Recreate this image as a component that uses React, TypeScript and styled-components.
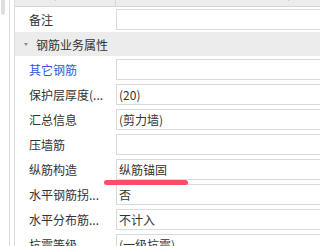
import React from 'react'
import styled, { createGlobalStyle } from 'styled-components'

const GlobalStyle = createGlobalStyle`
  html, body {
    margin: 0;
    padding: 0;
    background: #fff;
    overflow: hidden;
  }
  body {
    font-family: "Noto Sans CJK SC", "Noto Sans", sans-serif;
    font-size: 12px;
    color: #333;
  }
`

type Row = { label: string; value?: string; link?: boolean }

const groupRows: Row[] = [
  { label: '其它钢筋', link: true },
  { label: '保护层厚度(...', value: '(20)' },
  { label: '汇总信息', value: '(剪力墙)' },
  { label: '压墙筋' },
  { label: '纵筋构造', value: '纵筋锚固' },
  { label: '水平钢筋拐...', value: '否' },
  { label: '水平分布筋...', value: '不计入' },
  { label: '抗震等级', value: '(一级抗震)' },
]

function PropertyRow({ label, value, link }: Row) {
  return (
    <RowLine>
      <Label $link={link}>{label}</Label>
      <ValueCell>
        <ValueBox>{value}</ValueBox>
      </ValueCell>
    </RowLine>
  )
}

export default function App() {
  return (
    <>
      <GlobalStyle />
      <Frame>
        <Gutter>
          <Thumb />
        </Gutter>
        <Spacer />
        <Grid>
          <HeaderRow>
            <HeaderCell $divider>
              <HeaderText>属性名称</HeaderText>
            </HeaderCell>
            <HeaderCell>
              <HeaderText>属性值</HeaderText>
            </HeaderCell>
          </HeaderRow>
          <PropertyRow label="备注" />
          <GroupRow>
            <Caret />
            <span>钢筋业务属性</span>
          </GroupRow>
          {groupRows.map((r) => (
            <PropertyRow key={r.label} {...r} />
          ))}
        </Grid>
        <Underline />
      </Frame>
    </>
  )
}

const Frame = styled.div`
  position: relative;
  display: flex;
  width: 320px;
  height: 246px;
  overflow: hidden;
`

const Gutter = styled.div`
  flex: none;
  width: 8px;
  padding-left: 1px;
  border-right: 1px solid #dcdcdc;
`

const Thumb = styled.div`
  width: 4px;
  height: 15px;
  background: #dedede;
  border-radius: 0 0 2px 2px;
`

const Spacer = styled.div`
  flex: none;
  width: 4px;
  border-right: 1px solid #dcdcdc;
`

const Grid = styled.div`
  flex: none;
  width: 453px;
  display: flex;
  flex-direction: column;
`

const HeaderRow = styled.div`
  display: grid;
  grid-template-columns: 101px 1fr;
  height: 6px;
  background: #ececec;
  border-bottom: 1px solid #d6d6d6;
  flex: none;
`

const HeaderCell = styled.div<{ $divider?: boolean }>`
  display: flex;
  align-items: flex-end;
  justify-content: center;
  overflow: hidden;
  border-right: ${(p) => (p.$divider ? '1px solid #d6d6d6' : 'none')};
`

const HeaderText = styled.span`
  flex: none;
  line-height: 16px;
  margin-bottom: 4px;
  color: #333;
`

const RowLine = styled.div`
  display: grid;
  grid-template-columns: 101px 1fr;
  height: 25px;
  flex: none;
`

const Label = styled.div<{ $link?: boolean }>`
  display: flex;
  align-items: center;
  padding-left: 14px;
  white-space: nowrap;
  overflow: hidden;
  color: ${(p) => (p.$link ? '#2f5bd6' : '#333')};
`

const ValueCell = styled.div`
  padding: 2px 0;
`

const ValueBox = styled.div`
  box-sizing: border-box;
  height: 21px;
  border: 1px solid #dadada;
  border-right: none;
  padding-left: 2px;
  display: flex;
  align-items: center;
  white-space: nowrap;
  color: #333;
`

const GroupRow = styled.div`
  display: flex;
  align-items: center;
  gap: 8px;
  height: 24px;
  padding-left: 9px;
  background: #ececec;
  border-bottom: 1px solid #fff;
  flex: none;
  color: #333;
`

const Caret = styled.span`
  width: 0;
  height: 0;
  border-left: 2px solid transparent;
  border-right: 2px solid transparent;
  border-top: 3px solid #8a8a8a;
  margin-top: 1px;
`

const Underline = styled.div`
  position: absolute;
  left: 104px;
  top: 180px;
  width: 84px;
  height: 5px;
  border-radius: 3px;
  background: #fe4d68;
`
